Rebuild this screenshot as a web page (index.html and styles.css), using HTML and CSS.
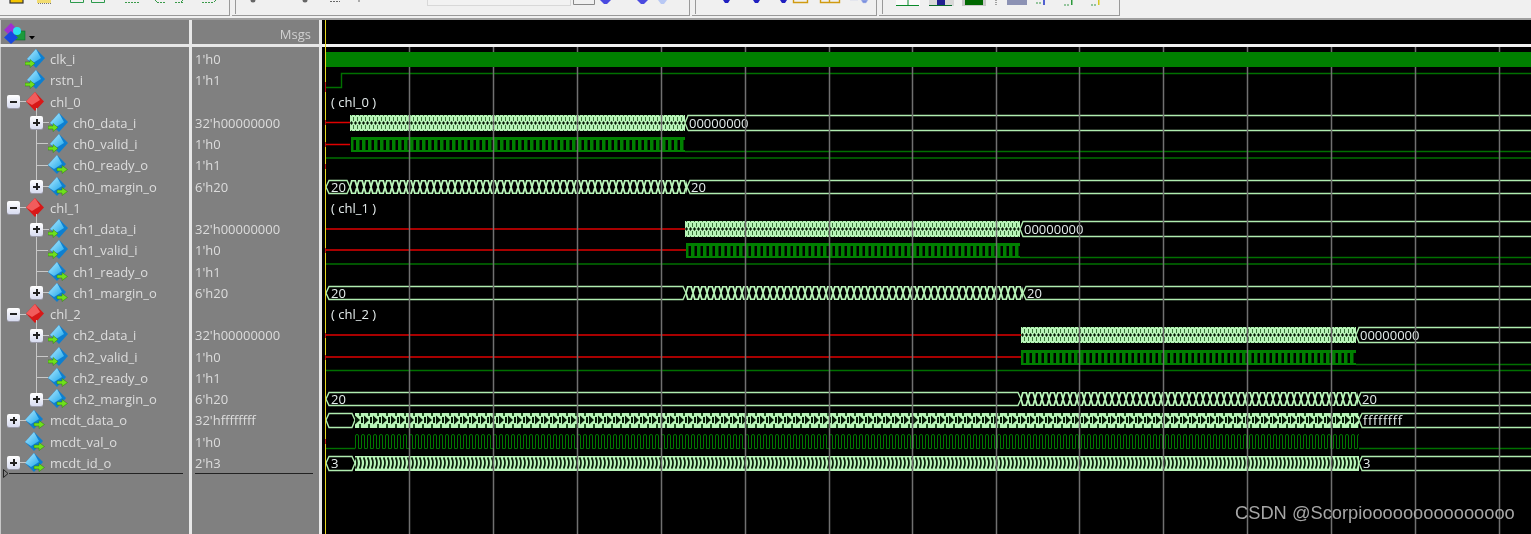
FILE: index.html
```html
<!DOCTYPE html>
<html lang="en">

<head>
    <meta charset="UTF-8">
    <meta name="viewport" content="width=device-width, initial-scale=1.0">
    <title>Wave</title>
    <link rel="stylesheet" href="styles.css">
</head>

<body>
    <svg class="defs" width="0" height="0" aria-hidden="true">
        <defs>
            <linearGradient id="blueTop" x1="0" y1="0" x2="1" y2="1">
                <stop offset="0" stop-color="#b8ecff" />
                <stop offset="1" stop-color="#1fa8ec" />
            </linearGradient>
            <symbol id="ic-in" viewBox="0 0 20 20">
                <polygon points="11,0 20,9 11,19 2,10" fill="#0d7fd0" />
                <polygon points="11,0 16,9 8,14 2,10" fill="url(#blueTop)" />
                <polygon points="0,13 5,13 5,10.5 10,14.5 5,18.5 5,16 0,16" fill="#6fe01c" stroke="#2d7a10" stroke-width=".5" />
            </symbol>
            <symbol id="ic-out" viewBox="0 0 20 20">
                <polygon points="9,0 18,9 9,19 0,10" fill="#0d7fd0" />
                <polygon points="9,0 14,9 6,14 0,10" fill="url(#blueTop)" />
                <polygon points="9,13 14,13 14,10.5 19.5,14.5 14,18.5 14,16 9,16" fill="#6fe01c" stroke="#2d7a10" stroke-width=".5" />
            </symbol>
            <symbol id="ic-group" viewBox="0 0 20 20">
                <polygon points="10,0 19,9.5 10,19 1,9.5" fill="#d81818" />
                <polygon points="10,0 15,8 7,13 1,9.5" fill="#f25c5c" />
            </symbol>
            <pattern id="p-data" width="4" height="16" patternUnits="userSpaceOnUse">
                <rect width="4" height="16" fill="#b8f4b8" />
                <polygon points="0,8 1.500,6 3,8 1.500,10" fill="#061a06" />
                <rect x="3" y="2" width="1" height="4" fill="#3a763a" />
                <rect x="3" y="10" width="1" height="4" fill="#3a763a" />
                <rect x="1" y="0" width="1" height="1" fill="#3a763a" />
                <rect x="1" y="15" width="1" height="1" fill="#3a763a" />
            </pattern>
            <pattern id="p-margin" width="7" height="14" patternUnits="userSpaceOnUse">
                <path d="M1.500 .5H5.500M1.500 13.500H5.500M-2 0L2 14M2 0L-2 14M5 0L9 14M9 0L5 14" stroke="#b8f4b8" stroke-width="1.800" fill="none" />
            </pattern>
            <pattern id="p-mcdt" width="9" height="14" patternUnits="userSpaceOnUse">
                <rect width="9" height="14" fill="#b8f4b8" />
                <polygon points="0,2.500 5,7 0,11.500" fill="#061a06" />
                <rect x="6" y="4" width="2" height="6" fill="#061a06" />
                <rect x="4" y="0" width="2" height="3" fill="#1e4e1e" />
                <rect x="4" y="11" width="2" height="3" fill="#1e4e1e" />
            </pattern>
            <pattern id="p-id" width="4" height="14" patternUnits="userSpaceOnUse">
                <rect width="4" height="14" fill="#b8f4b8" />
                <path d="M.6 1.500Q3.400 7 .6 12.500" stroke="#061a06" stroke-width="1.700" fill="none" />
            </pattern>
            <pattern id="p-valid" width="6" height="15" patternUnits="userSpaceOnUse">
                <rect width="6" height="15" fill="#008000" />
                <rect x="2.500" y="3" width="2.500" height="10" fill="#000" />
            </pattern>
            <pattern id="p-val" width="6" height="15" patternUnits="userSpaceOnUse">
                <path d="M.5 14.500V2Q.5 .5 2 .5Q3.500 .5 3.500 2V14.500H6" stroke="#007800" stroke-width="1" fill="none" />
            </pattern>
        </defs>
    </svg>

    <div class="toolbar">
        <div class="tb-group tb-first">
            <svg class="tb-icons" width="229" height="15">
                <rect x="10" y="-4" width="13" height="7" fill="#f4c400" stroke="#333" stroke-width="1.200" />
                <rect x="37" y="0" width="14" height="3" fill="#f2dc70" />
                <path d="M38 3.500H52" stroke="#777" stroke-dasharray="1 1" />
                <path d="M70.500 -2V2.500H83.500V-2M91.500 -2V2.500H104.500V-2" stroke="#2c9a4c" fill="none" />
                <path d="M125 2.500H139M157 2.500H166M175 2.500H183M202 2.500H214" stroke="#3a9a4a" stroke-dasharray="2 1" />
                <path d="M155 0L157 2M183 0L181 2M214 2L216 0" stroke="#3a9a4a" />
            </svg>
        </div>
        <div class="tb-group tb-second">
            <span class="tb-grip"></span>
            <svg class="tb-icons" width="452" height="15">
                <circle cx="17" cy="0" r="2.500" fill="#666" />
                <circle cx="69" cy="0" r="2.500" fill="#666" />
                <path d="M94 1.500H104M123 0V3" stroke="#666" stroke-dasharray="2 1" />
                <rect x="191.500" y="-3" width="143" height="8.500" fill="#f2f2f2" stroke="#d8d8d8" />
                <path d="M337.500 0V4.500H358.500V0" stroke="#888" fill="#f0f0f0" />
                <path d="M364 0H375L371 4H368Z" fill="#4a4ae0" />
                <path d="M401 0H412L408 4H405Z" fill="#4a4ae0" />
                <path d="M422 0H431L428 4H425Z" fill="#b8c8f4" />
            </svg>
        </div>
        <div class="tb-group tb-third">
            <span class="tb-grip"></span>
            <svg class="tb-icons" width="180" height="15">
                <path d="M27 0H34L32 3H29Z" fill="#2020c0" />
                <path d="M57 0H64L62 3H59Z" fill="#2020c0" />
                <path d="M84 0H91L89 3H86Z" fill="#2020c0" />
                <path d="M97.500 -2V2.500H111.500V-2M124.500 -2V2.500H143.500V-2M133.500 -2V2.500" stroke="#d09a10" stroke-width="1.400" fill="none" />
                <path d="M154 0H162M165 0H172L170 3H167Z" fill="#7a90e0" stroke="#c0c8e8" stroke-width=".5" />
            </svg>
        </div>
        <div class="tb-group tb-fourth">
            <span class="tb-grip"></span>
            <svg class="tb-icons" width="236" height="15">
                <rect x="13" y="-2" width="24" height="8" fill="#fafafa" />
                <path d="M13 5.500H36M25 -2V5" stroke="#0a8a2a" />
                <rect x="46" y="-2" width="25" height="8" fill="#d8d8d8" />
                <path d="M46 5.500H69" stroke="#0a6a2a" />
                <rect x="54" y="-2" width="8" height="7" fill="#202090" />
                <rect x="79" y="-2" width="24" height="8" fill="#c8c8c8" />
                <rect x="82" y="-2" width="18" height="7" fill="#006800" />
                <path d="M113 0V6" stroke="#555" stroke-dasharray="1 1" />
                <rect x="124" y="-1" width="20" height="6" fill="#8c92b4" />
                <path d="M153 3H159M181 5H187M208 5H214" stroke="#3a9a4a" stroke-dasharray="2 1" />
                <rect x="160" y="0" width="2" height="5" fill="#5060d0" />
                <rect x="188" y="0" width="1.500" height="5" fill="#2a9a3a" />
                <rect x="215" y="0" width="1.500" height="5" fill="#d8c820" />
            </svg>
        </div>
    </div>

    <div class="panes">
        <div class="pane pane-names">
            <div class="pane-head names-head">
                <svg class="head-icon" width="34" height="22" viewBox="0 0 34 22">
                    <polygon points="8,0 15,7 8,14 1,7" fill="#a030d0" />
                    <rect x="12" y="8" width="10" height="9" fill="#1c9a3c" stroke="#0c6a2c" stroke-width=".6" />
                    <polygon points="8,8 15,14.500 8,21 1,14.500" fill="#1848e0" />
                    <circle cx="14" cy="8" r="4" fill="#2ce0f0" />
                    <polygon points="26,13 32,13 29,16.500" fill="#000" />
                </svg>
            </div>
            <div class="rows">
                <div class="row"><span class="twist"></span><svg class="icon"><use href="#ic-in" /></svg><span class="label">clk_i</span></div>
                <div class="row"><span class="twist"></span><svg class="icon"><use href="#ic-in" /></svg><span class="label">rstn_i</span></div>
                <div class="row group"><span class="twist open"></span><svg class="icon"><use href="#ic-group" /></svg><span class="label">chl_0</span></div>
                <div class="row child"><span class="twist closed"></span><svg class="icon"><use href="#ic-in" /></svg><span class="label">ch0_data_i</span></div>
                <div class="row child leaf"><span class="twist"></span><svg class="icon"><use href="#ic-in" /></svg><span class="label">ch0_valid_i</span></div>
                <div class="row child leaf"><span class="twist"></span><svg class="icon"><use href="#ic-out" /></svg><span class="label">ch0_ready_o</span></div>
                <div class="row child last"><span class="twist closed"></span><svg class="icon"><use href="#ic-out" /></svg><span class="label">ch0_margin_o</span></div>
                <div class="row group"><span class="twist open"></span><svg class="icon"><use href="#ic-group" /></svg><span class="label">chl_1</span></div>
                <div class="row child"><span class="twist closed"></span><svg class="icon"><use href="#ic-in" /></svg><span class="label">ch1_data_i</span></div>
                <div class="row child leaf"><span class="twist"></span><svg class="icon"><use href="#ic-in" /></svg><span class="label">ch1_valid_i</span></div>
                <div class="row child leaf"><span class="twist"></span><svg class="icon"><use href="#ic-out" /></svg><span class="label">ch1_ready_o</span></div>
                <div class="row child last"><span class="twist closed"></span><svg class="icon"><use href="#ic-out" /></svg><span class="label">ch1_margin_o</span></div>
                <div class="row group"><span class="twist open"></span><svg class="icon"><use href="#ic-group" /></svg><span class="label">chl_2</span></div>
                <div class="row child"><span class="twist closed"></span><svg class="icon"><use href="#ic-in" /></svg><span class="label">ch2_data_i</span></div>
                <div class="row child leaf"><span class="twist"></span><svg class="icon"><use href="#ic-in" /></svg><span class="label">ch2_valid_i</span></div>
                <div class="row child leaf"><span class="twist"></span><svg class="icon"><use href="#ic-out" /></svg><span class="label">ch2_ready_o</span></div>
                <div class="row child last"><span class="twist closed"></span><svg class="icon"><use href="#ic-out" /></svg><span class="label">ch2_margin_o</span></div>
                <div class="row"><span class="twist closed"></span><svg class="icon"><use href="#ic-out" /></svg><span class="label">mcdt_data_o</span></div>
                <div class="row"><span class="twist"></span><svg class="icon"><use href="#ic-out" /></svg><span class="label">mcdt_val_o</span></div>
                <div class="row"><span class="twist closed"></span><svg class="icon"><use href="#ic-out" /></svg><span class="label">mcdt_id_o</span></div>
            </div>
            <div class="list-end"><svg class="end-mark" width="6" height="9"><path d="M.5 .5L5 4.500L.5 8.500Z" fill="#808080" stroke="#222" /></svg><span class="end-line"></span></div>
        </div>

        <div class="pane pane-values">
            <div class="pane-head msgs">Msgs</div>
            <div class="rows">
                <div class="row value">1'h0</div>
                <div class="row value">1'h1</div>
                <div class="row value"></div>
                <div class="row value">32'h00000000</div>
                <div class="row value">1'h0</div>
                <div class="row value">1'h1</div>
                <div class="row value">6'h20</div>
                <div class="row value"></div>
                <div class="row value">32'h00000000</div>
                <div class="row value">1'h0</div>
                <div class="row value">1'h1</div>
                <div class="row value">6'h20</div>
                <div class="row value"></div>
                <div class="row value">32'h00000000</div>
                <div class="row value">1'h0</div>
                <div class="row value">1'h1</div>
                <div class="row value">6'h20</div>
                <div class="row value">32'hffffffff</div>
                <div class="row value">1'h0</div>
                <div class="row value">2'h3</div>
            </div>
            <div class="list-end"><span class="end-line"></span></div>
        </div>

        <svg class="wave" viewBox="322 20 1209 514" width="1209" height="514">
            <rect x="322" y="20" width="1209" height="514" fill="#000" />

            <!-- rstn -->
            <path d="M326 87.500H341.500V73.500H1531" class="low" />

            <!-- chl_0 -->
            <text x="331" y="107" class="sig">( chl_0 )</text>
            <path d="M326 122.500H350M326 144.500H350" class="red" />
            <g transform="translate(350,115)">
                <rect width="335" height="16" fill="url(#p-data)" />
            </g>
            <path d="M685 123L688 115.500H1531M688 130.500H1531M685 123L688 130.500" class="bus" />
            <text x="689" y="128" class="sig">00000000</text>
            <g transform="translate(351,137)">
                <rect width="334" height="15" fill="url(#p-valid)" />
            </g>
            <path d="M685 151.500H1531" class="low" />
            <path d="M326 158H1531" class="low" />
            <path d="M329 180.500H347L350 187L347 193.500H329L326 187Z" class="bus" />
            <text x="331" y="192" class="sig">20</text>
            <g transform="translate(350,180)">
                <rect width="337" height="14" fill="url(#p-margin)" />
            </g>
            <path d="M687 187L690 180.500H1531M687 187L690 193.500H1531" class="bus" />
            <text x="691" y="192" class="sig">20</text>

            <!-- chl_1 -->
            <text x="331" y="213" class="sig">( chl_1 )</text>
            <path d="M326 229H685M326 250H686" class="red" />
            <g transform="translate(685,221)">
                <rect width="335" height="16" fill="url(#p-data)" />
            </g>
            <path d="M1020 229L1023 221.500H1531M1020 229L1023 236.500H1531" class="bus" />
            <text x="1024" y="234" class="sig">00000000</text>
            <g transform="translate(686,243)">
                <rect width="334" height="15" fill="url(#p-valid)" />
            </g>
            <path d="M1020 257.500H1531M326 264H1531" class="low" />
            <path d="M329 286.500H683L686 293L683 299.500H329L326 293Z" class="bus" />
            <text x="331" y="298" class="sig">20</text>
            <g transform="translate(686,286)">
                <rect width="337" height="14" fill="url(#p-margin)" />
            </g>
            <path d="M1023 293L1026 286.500H1531M1023 293L1026 299.500H1531" class="bus" />
            <text x="1027" y="298" class="sig">20</text>

            <!-- chl_2 -->
            <text x="331" y="319" class="sig">( chl_2 )</text>
            <path d="M326 335H1021M326 357H1021" class="red" />
            <g transform="translate(1021,327)">
                <rect width="335" height="16" fill="url(#p-data)" />
            </g>
            <path d="M1356 335L1359 327.500H1531M1356 335L1359 342.500H1531" class="bus" />
            <text x="1360" y="340" class="sig">00000000</text>
            <g transform="translate(1021,350)">
                <rect width="335" height="15" fill="url(#p-valid)" />
            </g>
            <path d="M1356 364.500H1531M326 370.500H1531" class="low" />
            <path d="M329 392.500H1018L1021 399L1018 405.500H329L326 399Z" class="bus" />
            <text x="331" y="404" class="sig">20</text>
            <g transform="translate(1021,392)">
                <rect width="337" height="14" fill="url(#p-margin)" />
            </g>
            <path d="M1358 399L1361 392.500H1531M1358 399L1361 405.500H1531" class="bus" />
            <text x="1362" y="404" class="sig">20</text>

            <!-- mcdt -->
            <path d="M329 413.500H352L355 420L352 427.500H329L326 420Z" class="bus" />
            <g transform="translate(355,413)">
                <rect width="1004" height="15" fill="url(#p-mcdt)" />
            </g>
            <path d="M1359 420L1362 413.500H1531M1359 420L1362 427.500H1531" class="bus" />
            <text x="1363" y="425" class="sig wide">ffffffff</text>

            <path d="M326 448.500H355" class="low" />
            <g transform="translate(355,434)">
                <rect width="1004" height="15" fill="url(#p-val)" />
            </g>
            <path d="M1359 448.500H1531" class="low" />

            <path d="M329 456.500H352L355 463L352 470.500H329L326 463Z" class="bus" />
            <text x="331" y="468" class="sig">3</text>
            <g transform="translate(355,456)">
                <rect width="1004" height="15" fill="url(#p-id)" />
            </g>
            <path d="M1359 463L1362 456.500H1531M1359 463L1362 470.500H1531" class="bus" />
            <text x="1363" y="468" class="sig">3</text>

            <!-- grid -->
            <path class="grid" d="M409.500 47V534M493.500 47V534M577.500 47V534M661.500 47V534M745.500 47V534M829.500 47V534M912.500 47V534M996.500 47V534M1079.500 47V534M1163.500 47V534M1247.500 47V534M1331.500 47V534M1415.500 47V534M1499.500 47V534" />

            <!-- clk sits over the grid -->
            <rect x="326" y="52" width="1205" height="15" fill="#008000" />

            <rect x="322" y="44" width="1209" height="3" fill="#f0f0f0" />
            <path d="M325.500 20V534" class="cursor" />
            <path d="M325.500 82V92M325.500 120V125M325.500 142V147M325.500 164V169M325.500 248V253M325.500 333V338M325.500 355V360M325.500 439V444" class="tick" />

            <text x="1235" y="519" class="mark">CSDN @Scorpiooooooooooooooo</text>
        </svg>
    </div>
</body>

</html>
```

FILE: styles.css
```css
html,
body {
    margin: 0;
    height: 534px;
    overflow: hidden;
    background: #f0f0f0;
}

body {
    font-family: "Open Sans", "Liberation Sans", sans-serif;
    font-size: 13px;
    color: #dcdcdc;
}

.defs {
    display: block;
    height: 0;
}

/* toolbar, cut off at the top of the picture */
.toolbar {
    display: flex;
    height: 18px;
    background: #f0f0f0;
    border-bottom: 2px solid #a0a0a0;
}

.tb-group {
    display: flex;
    height: 15px;
    border-right: 1px solid #999;
    border-bottom: 1px solid #999;
    margin-right: 2px;
}

.tb-first {
    width: 229px;
}

.tb-second {
    width: 457px;
}

.tb-third {
    width: 184px;
}

.tb-fourth {
    width: 240px;
}

.tb-grip {
    width: 4px;
    height: 14px;
    flex: none;
    border-right: 1px solid #999;
    box-sizing: border-box;
}

.tb-icons {
    display: block;
    flex: none;
}

/* wave window */
.panes {
    display: flex;
    height: 514px;
    background: #f0f0f0;
}

.pane {
    height: 514px;
    background: #808080;
    border-right: 3px solid #e8e8e8;
    box-sizing: border-box;
    flex: none;
    filter: blur(0.3px);
}

.pane-names {
    width: 192px;
    box-shadow: inset 1px 0 0 #c8c8c8;
}

.pane-values {
    width: 130px;
}

.pane-head {
    height: 24px;
    box-sizing: content-box;
    border-bottom: 3px solid #e8e8e8;
}

.names-head {
    height: 21px;
    padding: 3px 0 0 3px;
}

.head-icon {
    display: block;
}

.msgs {
    height: 19px;
    padding: 5px 8px 0 0;
    text-align: right;
    color: #d0d0d0;
}

.rows {
    padding-top: 1.400px;
}

.row {
    position: relative;
    display: flex;
    align-items: center;
    height: 21.260px;
    white-space: nowrap;
}

.value {
    padding-left: 3px;
}

.child {
    padding-left: 23px;
}

/* tree connectors */
.group::before {
    content: "";
    position: absolute;
    left: 36px;
    top: 17px;
    bottom: 0;
    width: 1px;
    background: #c8c8c8;
}

.child::before {
    content: "";
    position: absolute;
    left: 36px;
    top: 0;
    bottom: 0;
    width: 1px;
    background: #c8c8c8;
}

.last::before {
    bottom: 14px;
}

.leaf::after {
    content: "";
    position: absolute;
    left: 36px;
    top: 10px;
    width: 12px;
    height: 1px;
    background: #c8c8c8;
}

.twist {
    position: relative;
    width: 25px;
    height: 13px;
    flex: none;
}

.open::before,
.closed::before {
    content: "";
    position: absolute;
    left: 7px;
    top: 0;
    width: 13px;
    height: 13px;
    border-radius: 2px;
    box-shadow: 0 1px 0 #9a9aa8;
}

.open::before {
    background:
        linear-gradient(#222, #222) center / 7px 2px no-repeat,
        linear-gradient(#fff, #d8dcf0);
}

.closed::before {
    background:
        linear-gradient(#222, #222) center / 7px 2px no-repeat,
        linear-gradient(#222, #222) center / 2px 7px no-repeat,
        linear-gradient(#fff, #d8dcf0);
}

/* stub that joins the box to the icon */
.open::after,
.closed::after {
    content: "";
    position: absolute;
    left: 20px;
    top: 6px;
    width: 6px;
    height: 1px;
    background: #c8c8c8;
}

.icon {
    width: 20px;
    height: 20px;
    flex: none;
    margin-right: 5px;
}

.list-end {
    display: flex;
    align-items: center;
    height: 9px;
    margin-top: -4px;
    padding: 0 6px 0 3px;
}

.end-mark {
    flex: none;
}

.end-line {
    flex: 1;
    height: 1px;
    background: #222;
}

.wave {
    display: block;
    flex: none;
    filter: blur(0.3px);
}

.wave text {
    font-family: "Open Sans", "Liberation Sans", sans-serif;
}

.sig {
    font-size: 13px;
    fill: #e4ecec;
}

.wide {
    letter-spacing: 0.6px;
}

.wave .mark {
    font-family: "Liberation Sans", sans-serif;
    font-size: 18.300px;
    fill: #a6a6a6;
}

.bus {
    fill: none;
    stroke: #b0ecb0;
    stroke-width: 1.400;
}

.low {
    fill: none;
    stroke: #007000;
    stroke-width: 1.400;
}

.red {
    fill: none;
    stroke: #e00000;
    stroke-width: 1.500;
}

.grid {
    fill: none;
    stroke: #707070;
    stroke-width: 1.500;
}

.cursor {
    fill: none;
    stroke: #e8d820;
    stroke-width: 1;
}

.tick {
    fill: none;
    stroke: #c02010;
    stroke-width: 1;
}
```
